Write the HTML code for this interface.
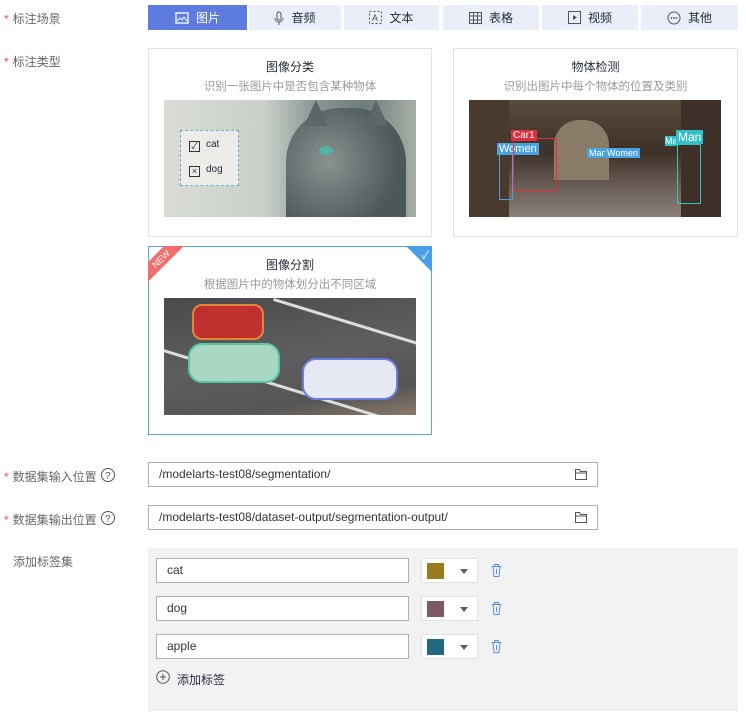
<!DOCTYPE html>
<html><head><meta charset="utf-8"><style>
*{box-sizing:border-box;margin:0;padding:0}
body{width:746px;height:717px;background:#fff;font-family:"Liberation Sans","Noto Sans CJK SC",sans-serif;font-size:12px;color:#252b3a;position:relative;overflow:hidden}
.a{position:absolute}
.lbl{color:#666}
.star{color:#e0574e;margin-right:4px}
.tab{position:absolute;top:5px;height:25px;background:#e9eef8;display:flex;align-items:center;justify-content:center;gap:7px;color:#252b3a}
.tab.on{background:#5e7ce0;color:#fff}
.card{position:absolute;border:1px solid #dfe1e6;background:#fff;text-align:center}
.card h4{font-weight:normal;font-size:12px;margin-top:9px;color:#252b3a}
.card p{color:#9a9a9a;font-size:11.5px;margin-top:3px}
.img{position:absolute;left:15px;top:51px;width:252px;height:117px;overflow:hidden}
.inp{position:absolute;border:1px solid #adb0b8;background:#fff;height:25px;padding-left:10px;line-height:23px;color:#333}
.sel{position:absolute;left:421px;width:57px;height:25px;border:1px solid #dfe1e6;background:#fff}
.sel i{position:absolute;left:5px;top:4px;width:17px;height:16px}
.sel b{position:absolute;left:38px;top:10px;border:4px solid transparent;border-top:5px solid #575d6c}
</style></head><body>
<div class="a lbl" style="left:4px;top:10px"><span class="star">*</span>标注场景</div>
<div class="a lbl" style="left:4px;top:53px"><span class="star">*</span>标注类型</div>

<div class="tab on" style="left:148px;width:99px"><svg width="14" height="12"><rect x="1" y="1" width="12" height="10" fill="none" stroke="#fff" stroke-width="1.3"/><path d="M2 9l3-3 2 2 2-3 3 4" fill="none" stroke="#fff"/></svg>图片</div>
<div class="tab" style="left:249px;width:92px"><svg width="10" height="14"><rect x="3" y="1" width="4" height="8" rx="2" fill="none" stroke="#555"/><path d="M1 7a4 4 0 0 0 8 0M5 11v3" fill="none" stroke="#555"/></svg>音频</div>
<div class="tab" style="left:344px;width:95px"><svg width="13" height="13"><rect x=".5" y=".5" width="12" height="12" fill="none" stroke="#555" stroke-dasharray="2 2"/><text x="3" y="10" font-size="9" fill="#555">A</text></svg>文本</div>
<div class="tab" style="left:443px;width:96px"><svg width="13" height="12"><rect x=".5" y=".5" width="12" height="11" fill="none" stroke="#555"/><path d="M.5 4h12M.5 8h12M4.5 .5v11M8.5 .5v11" stroke="#555"/></svg>表格</div>
<div class="tab" style="left:542px;width:96px"><svg width="13" height="13"><rect x=".5" y=".5" width="12" height="12" fill="none" stroke="#555"/><path d="M5 4l4 2.5L5 9z" fill="#555"/></svg>视频</div>
<div class="tab" style="left:641px;width:97px"><svg width="14" height="14"><circle cx="7" cy="7" r="6" fill="none" stroke="#555"/><circle cx="4.5" cy="7" r=".9" fill="#555"/><circle cx="7" cy="7" r=".9" fill="#555"/><circle cx="9.5" cy="7" r=".9" fill="#555"/></svg>其他</div>

<div class="card" style="left:148px;top:48px;width:284px;height:189px"><h4>图像分类</h4><p>识别一张图片中是否包含某种物体</p>
<div class="img" style="background:linear-gradient(90deg,#d9ddd6 0%,#c9cfc8 40%,#8a9694 60%,#6e7c7c 80%,#a8b0a6 100%)">
<div class="a" style="left:122px;top:8px;width:120px;height:120px;border-radius:45% 45% 0 0;background:radial-gradient(circle at 35% 45%,#8a9290,#4c575a 70%)"></div>
<div class="a" style="left:140px;top:0;width:0;height:0;border-left:12px solid transparent;border-right:12px solid transparent;border-bottom:26px solid #5c6668"></div>
<div class="a" style="left:200px;top:0;width:0;height:0;border-left:12px solid transparent;border-right:12px solid transparent;border-bottom:26px solid #5c6668"></div>
<div class="a" style="left:155px;top:46px;width:14px;height:9px;border-radius:50%;background:#4fb3a8"></div>
<div class="a" style="left:16px;top:30px;width:59px;height:56px;border:1px dashed #6fa8dc;background:rgba(240,240,236,.85);text-align:left;font-size:10px">
<div style="margin:8px 0 0 8px"><span style="display:inline-block;width:11px;height:11px;border:1px solid #333;vertical-align:-2px;margin-right:6px;font-size:9px;line-height:9px;text-align:center">✓</span>cat</div>
<div style="margin:12px 0 0 8px"><span style="display:inline-block;width:11px;height:11px;border:1px solid #333;vertical-align:-2px;margin-right:6px;font-size:9px;line-height:9px;text-align:center">×</span>dog</div></div></div></div>

<div class="card" style="left:453px;top:48px;width:285px;height:189px"><h4>物体检测</h4><p>识别出图片中每个物体的位置及类别</p>
<div class="img" style="background:linear-gradient(180deg,#5a4a3c 0%,#3d3128 45%,#6b6058 75%,#8a8078 100%)">
<div class="a" style="left:0;top:0;width:40px;height:117px;background:#4a3a2e"></div>
<div class="a" style="left:212px;top:0;width:40px;height:117px;background:#3e3028"></div>
<div class="a" style="left:85px;top:20px;width:55px;height:60px;background:#8a7a68;border-radius:25px 25px 0 0"></div>
<div class="a" style="left:30px;top:50px;width:14px;height:50px;border:1px solid #4aa3df"></div>
<div class="a" style="left:28px;top:43px;background:#4aa3df;color:#fff;font-size:11px;padding:0 2px">Women</div>
<div class="a" style="left:44px;top:38px;width:44px;height:53px;border:1px solid #e03040"></div>
<div class="a" style="left:42px;top:30px;background:#e03040;color:#fff;font-size:10px;padding:0 2px">Car1</div>
<div class="a" style="left:118px;top:48px;background:#4aa3df;color:#fff;font-size:9px;padding:0 2px">Man</div>
<div class="a" style="left:136px;top:48px;background:#4aa3df;color:#fff;font-size:9px;padding:0 2px">Women</div>
<div class="a" style="left:196px;top:36px;background:#35c0c8;color:#fff;font-size:9px">Ma</div>
<div class="a" style="left:207px;top:30px;background:#35c0c8;color:#fff;font-size:12px;padding:0 2px">Man</div>
<div class="a" style="left:208px;top:44px;width:24px;height:60px;border:1px solid #35c0c8"></div></div></div>

<div class="card" style="left:148px;top:246px;width:284px;height:189px;border-color:#5aa0e6"><h4>图像分割</h4><p>根据图片中的物体划分出不同区域</p>
<div class="a" style="left:-1px;top:-1px;width:40px;height:40px;overflow:hidden"><div style="position:absolute;left:-22px;top:6px;width:70px;height:14px;background:#f26d6d;transform:rotate(-45deg);color:#fff;font-size:9px;line-height:14px">NEW</div></div>
<div class="a" style="right:-1px;top:-1px;width:0;height:0;border-top:26px solid #4a9ee8;border-left:26px solid transparent"></div>
<div class="a" style="right:2px;top:0;color:#fff;font-size:11px">✓</div>
<div class="img" style="background:linear-gradient(170deg,#4a4a4c 0%,#5e5e60 50%,#555 80%,#8a7a6a 100%)">
<div class="a" style="left:-20px;top:45px;width:320px;height:3px;background:#ddd;transform:rotate(17deg);transform-origin:0 0"></div>
<div class="a" style="left:110px;top:0;width:200px;height:3px;background:#ddd;transform:rotate(17deg);transform-origin:0 0"></div>
<div class="a" style="left:28px;top:6px;width:72px;height:36px;border-radius:10px;background:#c0302e;border:2px solid #e08838"></div>
<div class="a" style="left:24px;top:45px;width:92px;height:40px;border-radius:14px;background:#a8d8c4;border:2px solid #5cc6a0"></div>
<div class="a" style="left:138px;top:60px;width:96px;height:42px;border-radius:14px;background:#e6e8f4;border:2px solid #6a7ee0"></div></div></div>

<div class="a lbl" style="left:4px;top:468px"><span class="star">*</span>数据集输入位置</div>
<div class="a lbl" style="left:4px;top:511px"><span class="star">*</span>数据集输出位置</div>
<svg class="a" style="left:100px;top:467px" width="16" height="16"><circle cx="8" cy="8" r="6.5" fill="none" stroke="#555"/><text x="5" y="12" font-size="10" fill="#555">?</text></svg>
<svg class="a" style="left:100px;top:510px" width="16" height="16"><circle cx="8" cy="8" r="6.5" fill="none" stroke="#555"/><text x="5" y="12" font-size="10" fill="#555">?</text></svg>
<div class="inp" style="left:148px;top:462px;width:450px">/modelarts-test08/segmentation/</div>
<div class="inp" style="left:148px;top:505px;width:450px">/modelarts-test08/dataset-output/segmentation-output/</div>
<svg class="a" style="left:575px;top:469px" width="12" height="11"><path d="M.5 .5h4l1 2h6v8h-11zM.5 4h11" fill="none" stroke="#555"/></svg>
<svg class="a" style="left:575px;top:512px" width="12" height="11"><path d="M.5 .5h4l1 2h6v8h-11zM.5 4h11" fill="none" stroke="#555"/></svg>

<div class="a lbl" style="left:13px;top:553px">添加标签集</div>
<div class="a" style="left:148px;top:548px;width:590px;height:163px;background:#f2f2f2"></div>
<div class="inp" style="left:156px;top:558px;width:253px">cat</div>
<div class="inp" style="left:156px;top:596px;width:253px">dog</div>
<div class="inp" style="left:156px;top:634px;width:253px">apple</div>
<div class="sel" style="top:558px"><i style="background:#9a7a1e"></i><b></b></div>
<div class="sel" style="top:596px"><i style="background:#7d5866"></i><b></b></div>
<div class="sel" style="top:634px"><i style="background:#20677f"></i><b></b></div>
<svg class="a" style="left:491px;top:564px" width="11" height="13"><path d="M.5 2.5h10M3.5 2.5v-2h4v2M2 2.5l1 10h5l1-10M5.5 5v5" fill="none" stroke="#5e8fd6"/></svg>
<svg class="a" style="left:491px;top:602px" width="11" height="13"><path d="M.5 2.5h10M3.5 2.5v-2h4v2M2 2.5l1 10h5l1-10M5.5 5v5" fill="none" stroke="#5e8fd6"/></svg>
<svg class="a" style="left:491px;top:640px" width="11" height="13"><path d="M.5 2.5h10M3.5 2.5v-2h4v2M2 2.5l1 10h5l1-10M5.5 5v5" fill="none" stroke="#5e8fd6"/></svg>
<svg class="a" style="left:156px;top:670px" width="14" height="14"><circle cx="7" cy="7" r="6.3" fill="none" stroke="#555"/><path d="M7 4v6M4 7h6" stroke="#555"/></svg>
<div class="a" style="left:177px;top:671px;color:#252b3a">添加标签</div>
</body></html>
